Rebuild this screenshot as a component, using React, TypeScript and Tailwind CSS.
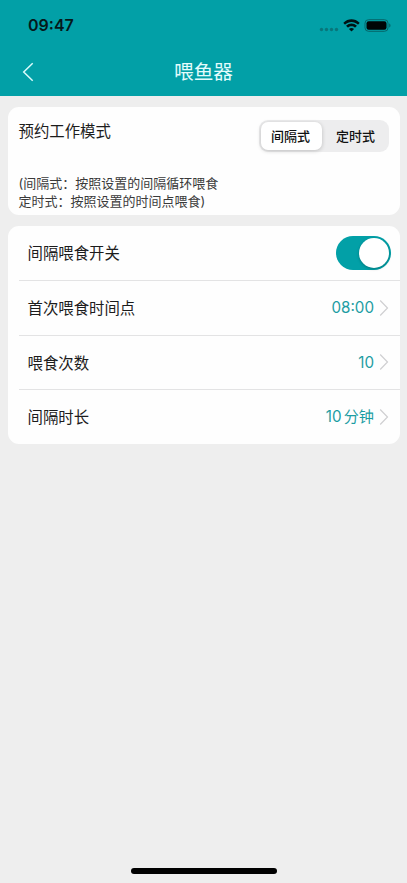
import React, { useState } from 'react';

type Mode = 'interval' | 'timed';

const modes: { id: Mode; label: string }[] = [
  { id: 'interval', label: '间隔式' },
  { id: 'timed', label: '定时式' },
];

const settings = [
  { label: '首次喂食时间点', value: '08:00', unit: '' },
  { label: '喂食次数', value: '10', unit: '' },
  { label: '间隔时长', value: '10', unit: '分钟' },
];

const StatusBar: React.FC = () => (
  <div className="flex h-[50px] items-center justify-between pl-[28px] pr-[15px]">
    <span className="text-[16px] font-semibold leading-none text-[#05191b]">09:47</span>
    <div className="flex items-center">
      <svg width="20" height="6" viewBox="0 0 20 6" className="mt-[9px]" fill="#08767b">
        <circle cx="2.5" cy="2.5" r="1.7" />
        <circle cx="7.5" cy="2.5" r="1.7" />
        <circle cx="12.5" cy="2.5" r="1.7" />
        <circle cx="17.5" cy="2.5" r="1.7" />
      </svg>
      <svg width="17" height="13" viewBox="0 0 16 12" className="ml-[4px]" fill="#001314">
        <path d="M8 2.6c2.2 0 4.300.85 5.900 2.400.1.1.3.1.4 0l1.300-1.300c.1-.1.1-.3 0-.4-4.300-4.200-10.900-4.200-15.200 0-.1.1-.1.3 0 .4l1.300 1.300c.1.1.3.1.4 0C3.700 3.450 5.800 2.600 8 2.600z" />
        <path d="M8 6.700c1.200 0 2.300.45 3.100 1.200.1.1.3.1.4 0l1.400-1.400c.1-.1.1-.3 0-.4-2.700-2.550-7.100-2.550-9.800 0-.1.1-.1.3 0 .4l1.400 1.400c.1.1.3.1.4 0C5.700 7.150 6.800 6.700 8 6.700z" />
        <path d="M10.200 9.100c.1.1.1.3 0 .4l-2 2c-.1.1-.3.1-.4 0l-2-2c-.1-.1-.1-.3 0-.4 1.200-1 3.200-1 4.400 0z" />
      </svg>
      <svg width="27" height="13" viewBox="0 0 27 13" className="ml-[4px] mr-px">
        <rect x="1" y="0.700" width="23" height="11.600" rx="3.500" fill="none" stroke="#06666a" />
        <rect x="2.500" y="2.200" width="20" height="8.600" rx="2.200" fill="#000506" />
        <path d="M25.200 4.500v4c.8-.3 1.300-1.100 1.300-2s-.5-1.700-1.300-2z" fill="#06666a" />
      </svg>
    </div>
  </div>
);

const Chevron: React.FC = () => (
  <svg width="10" height="18" viewBox="0 0 10 18" fill="none" stroke="#cfcfd1" strokeWidth="1.2">
    <path d="M1.200 1.500l7.300 7.500-7.300 7.500" />
  </svg>
);

const App: React.FC = () => {
  const [mode, setMode] = useState<Mode>('interval');
  const [enabled, setEnabled] = useState(true);

  return (
    <div className="flex h-[883px] w-[407px] flex-col bg-[#eeeeee] font-['Inter','Noto_Sans_CJK_SC',sans-serif] text-[#1c1c1c]">
      <header className="h-24 bg-[#02a0a7]">
        <StatusBar />
        <div className="grid h-11 grid-cols-[1fr_auto_1fr] items-center">
          <button className="pl-[22px]">
            <svg width="12" height="20" viewBox="0 0 12 20" fill="none" stroke="#dcfbfb" strokeWidth="1.5">
              <path d="M10.700 1.200L1.700 10l9 8.800" />
            </svg>
          </button>
          <h1 className="pt-[2px] text-[19.7px] leading-none text-[#e4fcfc]">喂鱼器</h1>
        </div>
      </header>

      <main className="flex flex-col gap-[11px] pl-2 pr-[7px] pt-[11px]">
        <section className="h-[108px] rounded-[11px] bg-[#fefefe] pl-[10.5px] pr-[11px] pt-[13px]">
          <div className="flex items-start justify-between">
            <h2 className="pt-px text-[15.4px] leading-[22px]">预约工作模式</h2>
            <div className="flex h-8 w-[130px] rounded-[9px] bg-[#ededee] p-[2px]">
              {modes.map((item) => (
                <button
                  key={item.id}
                  onClick={() => setMode(item.id)}
                  className={`flex-1 rounded-[7px] pr-[2px] pt-px text-[13px] leading-none font-medium text-[#111111] ${
                    mode === item.id ? 'mr-1 bg-white shadow-[0_1px_4px_rgba(0,0,0,0.2)]' : ''
                  }`}
                >
                  {item.label}
                </button>
              ))}
            </div>
          </div>
          <p className="mt-[22px] text-[13px] leading-[18px] text-[#3a3a3a]">
            (间隔式：按照设置的间隔循环喂食
            <br />
            定时式：按照设置的时间点喂食)
          </p>
        </section>

        <section className="h-[218px] rounded-[11px] bg-[#fefefe] pl-[11px]">
          <div className="flex h-[54px] items-center justify-between pl-[8.5px] pr-[9px]">
            <span className="pt-[2px] text-[15.4px]">间隔喂食开关</span>
            <button
              role="switch"
              aria-checked={enabled}
              onClick={() => setEnabled(!enabled)}
              className={`flex h-[34px] w-[55.5px] items-center rounded-full p-[2px] ${
                enabled ? 'justify-end bg-[#02a0a7]' : 'justify-start bg-gray-300'
              }`}
            >
              <span className="size-[30px] rounded-full bg-white shadow-[0_1px_3px_rgba(0,0,0,0.25)]" />
            </button>
          </div>
          {settings.map((item) => (
            <div
              key={item.label}
              className="flex h-[54.5px] items-center justify-between border-t border-[#e3e3e4] pl-[8.5px] pr-[11px]"
            >
              <span className="pt-[2px] text-[15.4px]">{item.label}</span>
              <div className="flex items-center gap-[5px] text-[15.2px] text-[#1c9da3]">
                <span className="pt-[2px]">
                  {item.value}
                  {item.unit && <span className="ml-[2px]">{item.unit}</span>}
                </span>
                <Chevron />
              </div>
            </div>
          ))}
        </section>
      </main>

      <div className="mx-auto mt-auto mb-[9px] h-[6px] w-[146px] rounded-full bg-black" />
    </div>
  );
};

export default App;
